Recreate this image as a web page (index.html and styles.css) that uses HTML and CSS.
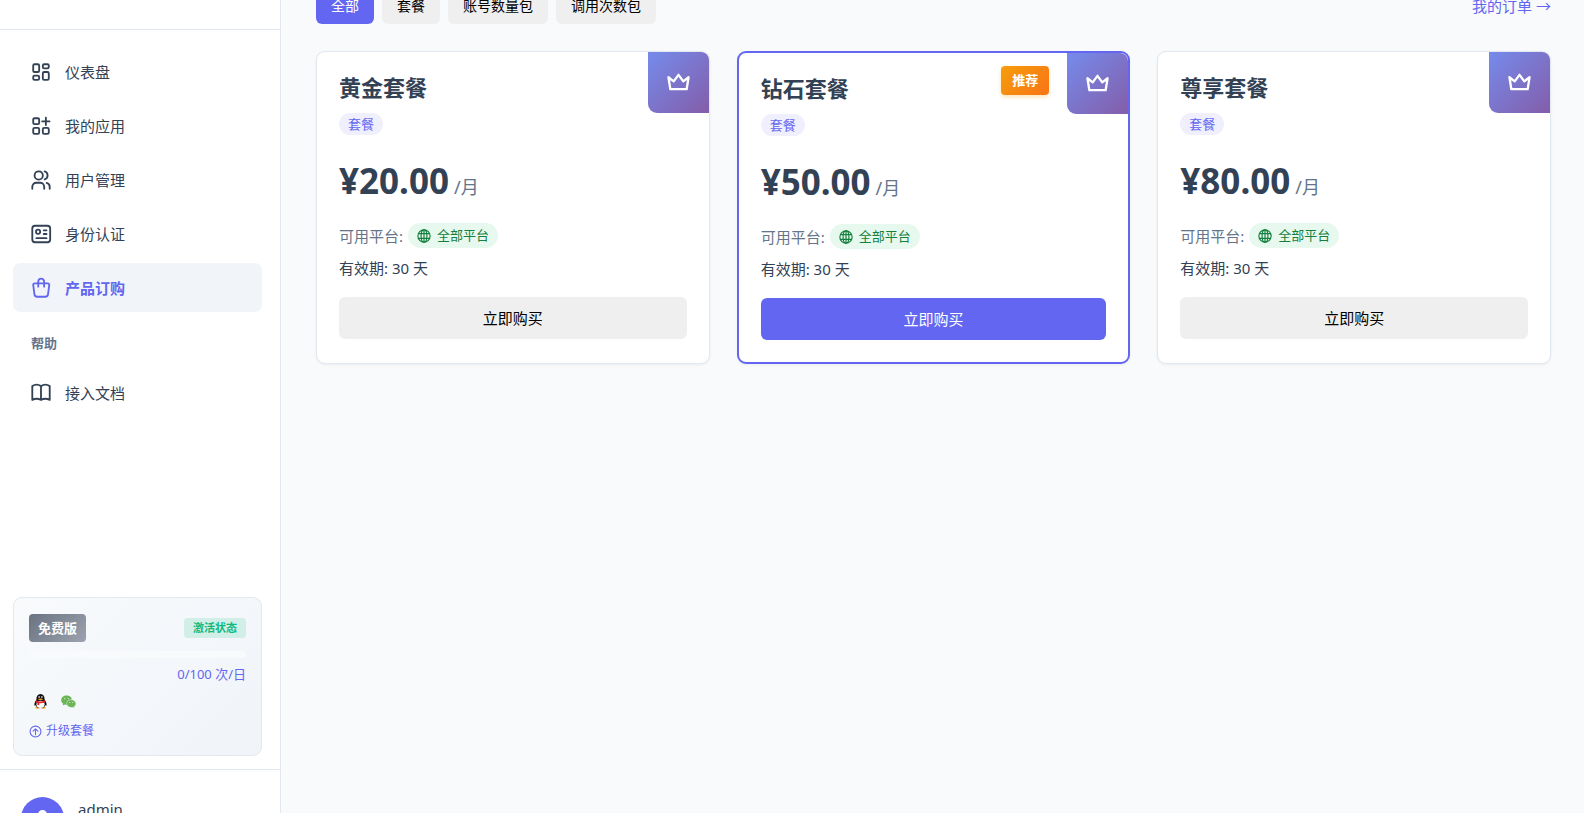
FILE: index.html
```html
<!DOCTYPE html>
<html lang="zh-CN">

<head>
  <meta charset="UTF-8" />
  <meta name="viewport" content="width=device-width, initial-scale=1.0" />
  <title>产品订购</title>
  <link rel="stylesheet" href="styles.css">
</head>

<body>
  <svg class="sprite" aria-hidden="true">
    <symbol id="crown" viewBox="0 0 24 24">
      <path d="M1.500 6.500 7 10.800 12 4l5 6.800 5.500-4.300-2 12.500h-17z" />
    </symbol>
    <symbol id="globe" viewBox="0 0 24 24">
      <circle cx="12" cy="12" r="10.500" />
      <ellipse cx="12" cy="12" rx="5" ry="10.500" />
      <path d="M12 1.500v21M2.500 8h19M2.500 16h19" />
    </symbol>
  </svg>

  <div class="layout">
    <aside class="sidebar">
      <div class="sidebar-header"></div>

      <nav class="nav">
        <a href="#" class="nav-item">
          <svg class="nav-icon" viewBox="0 0 24 24">
            <rect x="3.500" y="3.500" width="6.500" height="8.500" rx="1.500" />
            <rect x="14" y="3.500" width="6.500" height="4.500" rx="1.500" />
            <rect x="3.500" y="16" width="6.500" height="4.500" rx="1.500" />
            <rect x="14" y="12" width="6.500" height="8.500" rx="1.500" />
          </svg>
          <span>仪表盘</span>
        </a>
        <a href="#" class="nav-item">
          <svg class="nav-icon" viewBox="0 0 24 24">
            <rect x="3.500" y="3.500" width="6.500" height="6.500" rx="1.500" />
            <rect x="3.500" y="14" width="6.500" height="6.500" rx="1.500" />
            <rect x="14" y="14" width="6.500" height="6.500" rx="1.500" />
            <path d="M17.300 3v8M13.300 7h8" />
          </svg>
          <span>我的应用</span>
        </a>
        <a href="#" class="nav-item">
          <svg class="nav-icon" viewBox="0 0 24 24">
            <circle cx="9.500" cy="7" r="4.500" />
            <path d="M2.500 21.500v-2a4.500 4.500 0 0 1 4.500-4.500h4a4.500 4.500 0 0 1 4.500 4.500v2M16 2.700a4.500 4.500 0 0 1 0 8.600M21.500 21.500v-2a4.500 4.500 0 0 0-3.300-4.300" />
          </svg>
          <span>用户管理</span>
        </a>
        <a href="#" class="nav-item">
          <svg class="nav-icon" viewBox="0 0 24 24">
            <rect x="2.500" y="3" width="19.500" height="18" rx="3" />
            <circle cx="8.800" cy="9.500" r="2.300" />
            <path d="M15 8h3M15 12h3M7 16.500h11" />
          </svg>
          <span>身份认证</span>
        </a>
        <a href="#" class="nav-item active">
          <svg class="nav-icon" viewBox="0 0 24 24">
            <path d="M5 7h14.500a1.500 1.500 0 0 1 1.500 1.700l-1.300 10a3 3 0 0 1-3 2.800H7.800a3 3 0 0 1-3-2.800l-1.300-10A1.500 1.500 0 0 1 5 7z" />
            <path d="M9 10.500V5a3.200 3.200 0 0 1 6.400 0v5.500" />
          </svg>
          <span>产品订购</span>
        </a>
        <h2 class="nav-title">帮助</h2>
        <a href="#" class="nav-item">
          <svg class="nav-icon" viewBox="0 0 24 24">
            <path d="M2.500 19.500V4.500c3-2 6.500-2 9.500 0 3-2 6.500-2 9.500 0v15c-3-1.500-6.500-1.500-9.500 0-3-1.500-6.500-1.500-9.500 0zM12 4.500v15" />
          </svg>
          <span>接入文档</span>
        </a>
      </nav>

      <section class="plan">
        <div class="plan-head">
          <span class="plan-name">免费版</span>
          <span class="plan-status">激活状态</span>
        </div>
        <div class="plan-bar"></div>
        <div class="plan-usage">0/100 次/日</div>
        <div class="plan-platforms">
          <svg class="platform-icon" viewBox="0 0 24 24" role="img" aria-label="QQ">
            <ellipse cx="7.500" cy="22" rx="4" ry="1.700" fill="#f5a623" />
            <ellipse cx="16.500" cy="22" rx="4" ry="1.700" fill="#f5a623" />
            <path d="M5 10C2 14 1.500 18 3 19l2-2M19 10c3 4 3.500 8 2 9l-2-2" fill="#111" />
            <path d="M12 0C7.500 0 5.500 3.500 5.500 8L4 13c-1 5 2 9.500 8 9.500s9-4.500 8-9.500l-1.500-5C18.500 3.500 16.500 0 12 0z" fill="#111" />
            <ellipse cx="12" cy="16.500" rx="6.500" ry="5.800" fill="#fff" />
            <ellipse cx="9.800" cy="4.800" rx="1.300" ry="1.700" fill="#ccc" />
            <ellipse cx="14.200" cy="4.800" rx="1.300" ry="1.700" fill="#ccc" />
            <ellipse cx="12" cy="8.300" rx="4" ry="1.200" fill="#f5a623" />
            <path d="M5 10c4 2.500 10 2.500 14 0l.7 3c-3 1.500-6.500 2-9.700 1.700V18l-3-.3v-3.500L4.300 13z" fill="#e5252a" />
          </svg>
          <svg class="platform-icon" viewBox="0 0 24 24" role="img" aria-label="微信">
            <path d="M9 2.500C4 2.500.3 5.800.3 10c0 2.400 1.200 4.300 3.200 5.700L2.700 18.500l3.200-1.700c1 .3 2 .5 3.100.5 4.800 0 8.700-3.300 8.700-7.400S13.800 2.500 9 2.500z" fill="#6bb557" />
            <path d="M16.500 9C12.300 9 9 11.800 9 15.300s3.300 6.200 7.500 6.200c.9 0 1.800-.2 2.600-.4l2.600 1.400-.7-2.300c1.700-1.200 2.800-2.900 2.800-4.900C23.800 11.800 20.500 9 16.500 9z" fill="#6bb557" stroke="#f4f7fa" stroke-width=".7" />
            <path d="M5.500 7.500h.8M11.500 7.500h.8M13.800 13.500h.6M18.500 13.500h.6" stroke="#cfe6c8" stroke-width="1.600" />
          </svg>
        </div>
        <a href="#" class="plan-upgrade">
          <svg class="upgrade-icon" viewBox="0 0 24 24">
            <circle cx="12" cy="12" r="10" />
            <path d="M12 18V7M7.500 11.500 12 7l4.500 4.500" />
          </svg>
          <span>升级套餐</span>
        </a>
      </section>

      <div class="user">
        <svg class="avatar" viewBox="0 0 43 43" aria-hidden="true">
          <circle cx="21.500" cy="21.500" r="21.500" fill="#6366f1" />
          <circle cx="21.500" cy="17.500" r="4.500" fill="#fff" />
          <path d="M12.500 32c0-5 4-8 9-8s9 3 9 8z" fill="#fff" />
        </svg>
        <span class="user-name">admin</span>
      </div>
    </aside>

    <main class="content">
      <div class="toolbar">
        <div class="filters">
          <button class="filter active">全部</button>
          <button class="filter">套餐</button>
          <button class="filter">账号数量包</button>
          <button class="filter">调用次数包</button>
        </div>
        <a href="#" class="orders">我的订单 →</a>
      </div>

      <div class="products">
        <article class="card">
          <div class="corner"><svg><use href="#crown" /></svg></div>
          <h3 class="card-title">黄金套餐</h3>
          <span class="tag">套餐</span>
          <div class="price"><span>¥20.00</span><span class="unit">/月</span></div>
          <div class="platform">
            <span>可用平台:</span>
            <span class="platform-all"><svg><use href="#globe" /></svg>全部平台</span>
          </div>
          <div class="period">有效期: 30 天</div>
          <button class="buy">立即购买</button>
        </article>

        <article class="card featured">
          <div class="corner"><svg><use href="#crown" /></svg></div>
          <span class="recommend">推荐</span>
          <h3 class="card-title">钻石套餐</h3>
          <span class="tag">套餐</span>
          <div class="price"><span>¥50.00</span><span class="unit">/月</span></div>
          <div class="platform">
            <span>可用平台:</span>
            <span class="platform-all"><svg><use href="#globe" /></svg>全部平台</span>
          </div>
          <div class="period">有效期: 30 天</div>
          <button class="buy">立即购买</button>
        </article>

        <article class="card">
          <div class="corner"><svg><use href="#crown" /></svg></div>
          <h3 class="card-title">尊享套餐</h3>
          <span class="tag">套餐</span>
          <div class="price"><span>¥80.00</span><span class="unit">/月</span></div>
          <div class="platform">
            <span>可用平台:</span>
            <span class="platform-all"><svg><use href="#globe" /></svg>全部平台</span>
          </div>
          <div class="period">有效期: 30 天</div>
          <button class="buy">立即购买</button>
        </article>
      </div>
    </main>
  </div>
</body>

</html>
```

FILE: styles.css
```css
* {
  box-sizing: border-box;
}

body {
  margin: 0;
  background: #f8fafc;
  color: #334155;
  font-family: "Noto Sans", "Noto Sans CJK SC", sans-serif;
  font-size: 15px;
  line-height: 24px;
}

a {
  color: #6366f1;
  text-decoration: none;
}

button {
  border: none;
  border-radius: 6px;
  background: #efefef;
  color: #000;
  font-family: inherit;
  cursor: pointer;
}

svg {
  flex: none;
  fill: none;
  stroke-linecap: round;
  stroke-linejoin: round;
}

.sprite {
  display: none;
}

.layout {
  display: flex;
  height: 100vh;
  overflow: hidden;
}

/* Sidebar */
.sidebar {
  display: flex;
  flex-direction: column;
  flex: none;
  width: 281px;
  background: #fff;
  border-right: 1px solid #e2e8f0;
}

.sidebar-header {
  flex: none;
  height: 30px;
  border-bottom: 1px solid #e2e8f0;
}

.nav {
  display: flex;
  flex: 1;
  flex-direction: column;
  gap: 5px;
  padding: 17px 18px 0 13px;
}

.nav-item {
  display: flex;
  align-items: center;
  gap: 13px;
  height: 49px;
  padding: 0 17px;
  border-radius: 7px;
  color: #334155;
}

.nav-item.active {
  background: #f1f5f9;
  color: #6366f1;
  font-weight: 600;
}

.nav-icon {
  width: 22px;
  height: 22px;
  stroke: currentColor;
  stroke-width: 2;
}

.nav-title {
  margin: 0;
  padding: 16px 18px 10px;
  color: #64748b;
  font-size: 13px;
  font-weight: 600;
  line-height: 20px;
}

.plan {
  display: flex;
  flex-direction: column;
  margin: 0 18px 13px 13px;
  padding: 16px 15px 12px;
  border: 1px solid #e2e8f0;
  border-radius: 9px;
  background: linear-gradient(135deg, #f8fafc, #f0f4f9);
  font-size: 13px;
}

.plan-head {
  display: flex;
  align-items: center;
  justify-content: space-between;
  margin-bottom: 9px;
}

.plan-name {
  padding: 4px 9px;
  border-radius: 4px;
  background: linear-gradient(135deg, #6b7280, #9ca3af);
  color: #fff;
  font-weight: 700;
  line-height: 20px;
}

.plan-status {
  padding: 0 9px;
  border-radius: 4px;
  background: #d1efe7;
  color: #10b981;
  font-size: 11px;
  font-weight: 600;
  line-height: 20px;
}

.plan-bar {
  height: 7px;
  margin-bottom: 4px;
  border-radius: 4px;
  background: #f8fafc;
}

.plan-usage {
  color: #6366f1;
  text-align: right;
}

.plan-platforms {
  display: flex;
  gap: 13px;
  padding: 8px 4px 10px;
}

.platform-icon {
  width: 15px;
  height: 15px;
}

.plan-upgrade {
  display: flex;
  align-items: center;
  gap: 4px;
  font-size: 12px;
}

.upgrade-icon {
  width: 13px;
  height: 13px;
  stroke: currentColor;
  stroke-width: 2;
}

/* Only the top of the user block fits under the fold */
.user {
  display: flex;
  flex: none;
  gap: 14px;
  height: 44px;
  padding: 27px 21px 0;
  border-top: 1px solid #e2e8f0;
}

.avatar {
  width: 43px;
  height: 43px;
}

/* Content */
.content {
  flex: 1;
  padding: 0 33px 0 35px;
}

.toolbar {
  display: flex;
  align-items: center;
  justify-content: space-between;
  margin: -12px 0 27px;
}

.filters {
  display: flex;
  gap: 8px;
}

.filter {
  height: 36px;
  padding: 0 15px 2px;
  font-size: 14px;
}

.filter.active {
  background: #6366f1;
  color: #fff;
}

.products {
  display: grid;
  grid-template-columns: repeat(3, 1fr);
  gap: 27px;
}

.card {
  position: relative;
  display: flex;
  flex-direction: column;
  align-items: flex-start;
  padding: 19px 22px 24px;
  border: 1px solid #e2e8f0;
  border-radius: 9px;
  background: #fff;
  box-shadow: 0 1px 3px rgba(0, 0, 0, 0.06);
}

.card.featured {
  padding-bottom: 22px;
  border: 2px solid #6366f1;
}

.corner {
  position: absolute;
  top: 0;
  right: 0;
  display: flex;
  align-items: center;
  justify-content: center;
  width: 61px;
  height: 61px;
  border-radius: 0 8px 0 9px;
  background: linear-gradient(135deg, #758bec, #845da9);
}

.corner svg {
  width: 23px;
  height: 23px;
  stroke: #fff;
  stroke-width: 2.4;
}

.recommend {
  position: absolute;
  top: 13px;
  right: 79px;
  padding: 0 11px;
  border-radius: 4px;
  background: linear-gradient(135deg, #f59e0b, #f97316);
  box-shadow: 0 2px 4px rgba(245, 158, 11, 0.3);
  color: #fff;
  font-size: 13px;
  font-weight: 700;
  line-height: 29px;
}

.card-title {
  margin: 0 0 10px;
  font-size: 22px;
  font-weight: 700;
  line-height: 32px;
}

.tag {
  padding: 0 9px;
  border-radius: 11px;
  background: #efeffe;
  color: #6366f1;
  font-size: 13px;
  line-height: 22px;
}

.price {
  display: flex;
  align-items: baseline;
  gap: 5px;
  margin: 20px 0 16px;
  font-size: 35px;
  font-weight: 700;
  line-height: 52px;
}

.unit {
  color: #64748b;
  font-size: 18px;
  font-weight: 400;
  line-height: 24px;
}

.platform {
  display: flex;
  align-items: center;
  gap: 5px;
  color: #64748b;
}

.platform-all {
  display: flex;
  align-items: center;
  gap: 6px;
  padding: 0 9px;
  border-radius: 13px;
  background: #e7f8ee;
  color: #15803d;
  font-size: 13px;
  line-height: 25px;
}

.platform-all svg {
  width: 14px;
  height: 14px;
  stroke: currentColor;
  stroke-width: 2;
}

.period {
  margin: 8px 0 17px;
}

.buy {
  width: 100%;
  height: 42px;
  padding: 0 0 2px;
  font-size: 15px;
}

.featured .buy {
  background: #6366f1;
  color: #fff;
}
```
